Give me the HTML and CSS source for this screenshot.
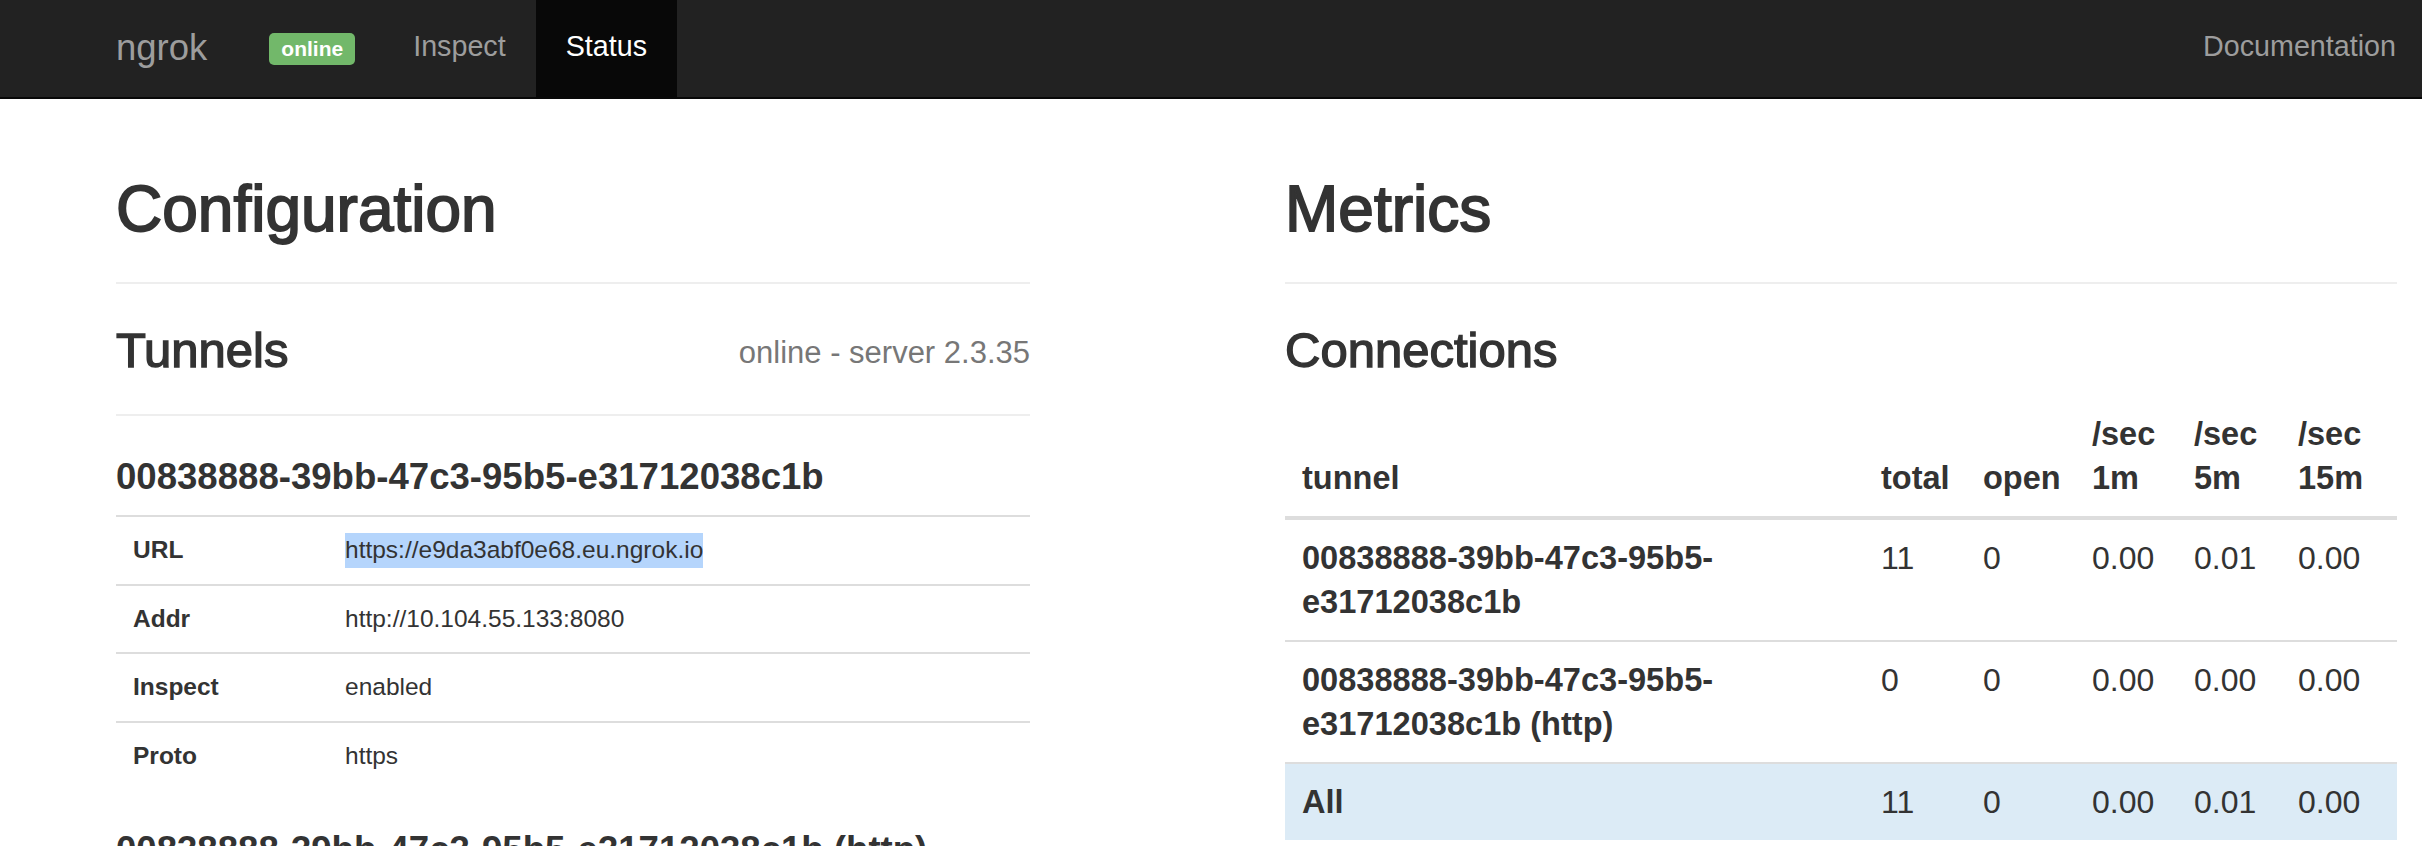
FILE: index.html
```html
<!DOCTYPE html>
<html lang="en">
<head>
<meta charset="utf-8">
<title>ngrok - Status</title>
<link rel="stylesheet" href="styles.css">
</head>
<body>
<nav class="navbar">
  <a class="brand" href="#">ngrok</a>
  <span class="badge">online</span>
  <ul class="nav">
    <li><a href="#">Inspect</a></li>
    <li class="active"><a href="#">Status</a></li>
  </ul>
  <ul class="nav nav-right">
    <li><a href="#">Documentation</a></li>
  </ul>
</nav>
<main class="content">
  <section class="col">
    <div class="page-header"><h1>Configuration</h1></div>
    <div class="page-header sub-header">
      <h2>Tunnels</h2>
      <small class="server">online - server 2.3.35</small>
    </div>
    <h3 class="tunnel-name">00838888-39bb-47c3-95b5-e31712038c1b</h3>
    <table class="kv">
      <tbody>
        <tr><th>URL</th><td><span class="selected">https://e9da3abf0e68.eu.ngrok.io</span></td></tr>
        <tr><th>Addr</th><td>http://10.104.55.133:8080</td></tr>
        <tr><th>Inspect</th><td>enabled</td></tr>
        <tr><th>Proto</th><td>https</td></tr>
      </tbody>
    </table>
    <h3 class="tunnel-name">00838888-39bb-47c3-95b5-e31712038c1b (http)</h3>
    <table class="kv">
      <tbody>
        <tr><th>URL</th><td>http://e9da3abf0e68.eu.ngrok.io</td></tr>
        <tr><th>Addr</th><td>http://10.104.55.133:8080</td></tr>
        <tr><th>Inspect</th><td>enabled</td></tr>
        <tr><th>Proto</th><td>http</td></tr>
      </tbody>
    </table>
  </section>
  <section class="col">
    <div class="page-header"><h1>Metrics</h1></div>
    <h2 class="section-title">Connections</h2>
    <table class="metrics">
      <thead>
        <tr>
          <th class="c-tunnel">tunnel</th>
          <th class="c-total">total</th>
          <th class="c-open">open</th>
          <th class="c-1m">/sec<br>1m</th>
          <th class="c-5m">/sec<br>5m</th>
          <th class="c-15m">/sec<br>15m</th>
        </tr>
      </thead>
      <tbody>
        <tr>
          <td class="name">00838888-39bb-47c3-95b5-e31712038c1b</td>
          <td>11</td><td>0</td><td>0.00</td><td>0.01</td><td>0.00</td>
        </tr>
        <tr>
          <td class="name">00838888-39bb-47c3-95b5-e31712038c1b (http)</td>
          <td>0</td><td>0</td><td>0.00</td><td>0.00</td><td>0.00</td>
        </tr>
        <tr class="info">
          <td class="name">All</td>
          <td>11</td><td>0</td><td>0.00</td><td>0.01</td><td>0.00</td>
        </tr>
      </tbody>
    </table>
  </section>
</main>
</body>
</html>
```

FILE: styles.css
```css
html, body {
  margin: 0;
  padding: 0;
  overflow: hidden;
}

body {
  font-family: "Liberation Sans", Arial, sans-serif;
  color: #333;
  background: #fff;
}

/* ---------- navbar ---------- */
.navbar {
  display: flex;
  align-items: stretch;
  height: 97px;
  background: #222;
  border-bottom: 2px solid #080808;
  padding-left: 87px;
}

.brand {
  display: block;
  padding: 28px 29px 30px;
  font-size: 36.5px;
  line-height: 39px;
  color: #9d9d9d;
  text-decoration: none;
}

.badge {
  align-self: center;
  margin-left: 33px;
  background: #72b86a;
  color: #fff;
  font-weight: bold;
  font-size: 21px;
  line-height: 1;
  padding: 5px 12px 6px;
  border-radius: 5px;
}

.nav {
  display: flex;
  list-style: none;
  margin: 0 0 0 28px;
  padding: 0;
}

.nav a {
  display: block;
  padding: 27px 30px 31px;
  font-size: 28.7px;
  line-height: 39px;
  color: #9d9d9d;
  text-decoration: none;
}

.nav .active a {
  background: #080808;
  color: #fff;
}

.nav-right {
  margin-left: auto;
}

.nav-right a {
  padding-right: 26px;
}

/* ---------- content ---------- */
.content {
  display: grid;
  grid-template-columns: 914px 1112px;
  column-gap: 255px;
  padding-left: 116px;
}

.page-header {
  margin-top: 75px;
  padding-bottom: 38px;
  border-bottom: 2px solid #eee;
}

h1 {
  margin: 0;
  font-size: 64px;
  line-height: 70px;
  font-weight: 500;
  -webkit-text-stroke: 1.8px #333;
}

h2 {
  margin: 0;
  font-size: 49px;
  line-height: 54px;
  font-weight: 500;
  -webkit-text-stroke: 1.4px #333;
}

.sub-header {
  margin-top: 39px;
  padding-bottom: 37px;
  display: flex;
  justify-content: space-between;
  align-items: flex-start;
}

.server {
  margin-top: 12px;
  font-size: 31px;
  line-height: 36px;
  color: #777;
}

.section-title {
  margin: 39px 0 19px;
}

.tunnel-name {
  margin: 41px 0 18px;
  font-size: 36.6px;
  line-height: 40px;
  font-weight: bold;
}

/* ---------- key/value table ---------- */
.kv {
  width: 100%;
  border-collapse: collapse;
  margin-bottom: 38px;
}

.kv th,
.kv td {
  text-align: left;
  vertical-align: top;
  padding: 16px 17px;
  border-top: 2px solid #ddd;
  font-size: 24.5px;
  line-height: 34.5px;
}

.kv th {
  width: 212px;
  box-sizing: border-box;
  font-weight: bold;
}

.selected {
  display: inline-block;
  background: #b5d5fc;
}

/* ---------- metrics table ---------- */
.metrics {
  width: 100%;
  border-collapse: collapse;
  table-layout: fixed;
}

.metrics th,
.metrics td {
  text-align: left;
  vertical-align: top;
  padding: 16px 17px;
  font-size: 32px;
  line-height: 44px;
}

.metrics thead th {
  vertical-align: bottom;
  border-bottom: 4px solid #ddd;
  font-weight: bold;
  font-size: 32.5px;
  box-sizing: border-box;
}

.metrics tbody td {
  border-top: 2px solid #ddd;
}

.metrics .name {
  font-weight: bold;
  font-size: 32.6px;
}

.metrics tr.info td {
  background: #dcebf6;
}

.c-total { width: 102px; }
.c-open { width: 109px; }
.c-1m { width: 102px; }
.c-5m { width: 104px; }
.c-15m { width: 116px; }
```
